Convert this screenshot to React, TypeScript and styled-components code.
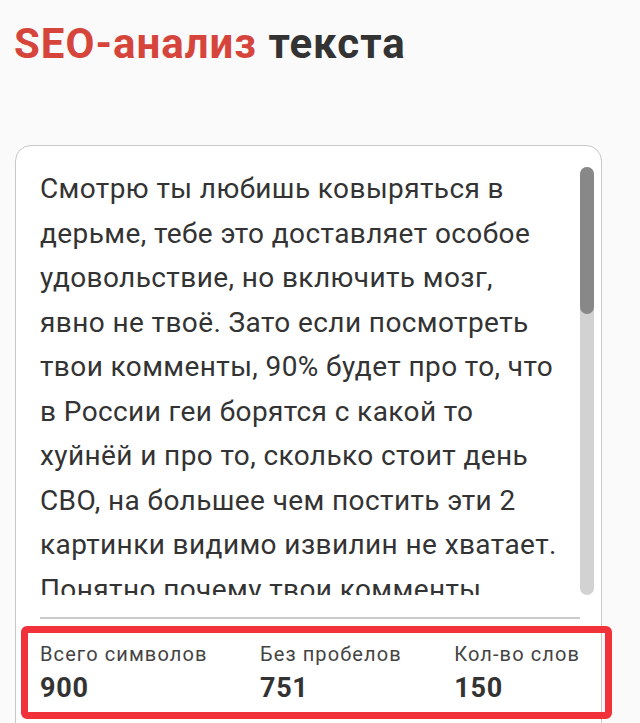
import React from 'react';
import styled, { createGlobalStyle } from 'styled-components';

const GlobalStyle = createGlobalStyle`
  html, body {
    margin: 0;
    padding: 0;
    background: #fafafa;
    font-family: Roboto, "Liberation Sans", Arial, sans-serif;
  }
`;

const Page = styled.div`
  padding: 20px 38px 40px 15px;
`;

const Title = styled.h1`
  margin: 0 0 0 -1px;
  font-size: 42px;
  line-height: 48px;
  font-weight: 700;
  letter-spacing: 1px;
  color: #333;
`;

const Accent = styled.span`
  color: #d6453c;
`;

const Card = styled.div`
  margin-top: 77px;
  border: 1px solid #c8c8c8;
  border-radius: 16px;
  background: #fff;
  padding: 21px 7px 40px 24px;
`;

const Editor = styled.div`
  display: flex;
  gap: 8px;
  height: 428px;
`;

const TextView = styled.div`
  flex: 1;
  overflow: hidden;
  font-size: 28px;
  line-height: 44.5px;
  letter-spacing: 0.4px;
  color: #333;
`;

const TextLine = styled.span`
  display: block;
  white-space: nowrap;
`;

const ScrollTrack = styled.div`
  width: 14px;
  flex-shrink: 0;
  border-radius: 7px;
  background: #d2d2d2;
`;

const ScrollThumb = styled.div`
  height: 147px;
  border-radius: 7px;
  background: #888;
`;

const Divider = styled.hr`
  margin: 22px 14px 0 0;
  border: none;
  border-top: 2px solid #cacaca;
`;

const Stats = styled.div`
  position: relative;
  display: flex;
  justify-content: space-between;
  margin-right: 14px;
  padding-top: 22px;
`;

const Stat = styled.div`
  display: flex;
  flex-direction: column;
  gap: 4px;
`;

const StatLabel = styled.span`
  font-size: 20px;
  line-height: 26px;
  letter-spacing: 1.1px;
  color: #444;
`;

const StatValue = styled.span`
  font-size: 27px;
  line-height: 35px;
  font-weight: 700;
  letter-spacing: 0.7px;
  color: #333;
`;

const Highlight = styled.div`
  position: absolute;
  left: -19px;
  right: -32px;
  top: 7px;
  height: 79px;
  border: 7px solid #f2323a;
  border-radius: 6px;
  pointer-events: none;
`;

const stats = [
  { label: 'Всего символов', value: '900' },
  { label: 'Без пробелов', value: '751' },
  { label: 'Кол-во слов', value: '150' },
];

const lines = [
  'Смотрю ты любишь ковыряться в',
  'дерьме, тебе это доставляет особое',
  'удовольствие, но включить мозг,',
  'явно не твоё. Зато если посмотреть',
  'твои комменты, 90% будет про то, что',
  'в России геи борятся с какой то',
  'хуйнёй и про то, сколько стоит день',
  'СВО, на большее чем постить эти 2',
  'картинки видимо извилин не хватает.',
  'Понятно почему твои комменты',
];

const App: React.FC = () => {
  return (
    <>
      <GlobalStyle />
      <Page>
        <Title>
          <Accent>SEO-анализ</Accent> текста
        </Title>
        <Card>
          <Editor>
            <TextView>
              {lines.map((line, i) => (
                <TextLine key={i}>{line}</TextLine>
              ))}
            </TextView>
            <ScrollTrack>
              <ScrollThumb />
            </ScrollTrack>
          </Editor>
          <Divider />
          <Stats>
            {stats.map((s) => (
              <Stat key={s.label}>
                <StatLabel>{s.label}</StatLabel>
                <StatValue>{s.value}</StatValue>
              </Stat>
            ))}
            <Highlight />
          </Stats>
        </Card>
      </Page>
    </>
  );
};

export default App;
